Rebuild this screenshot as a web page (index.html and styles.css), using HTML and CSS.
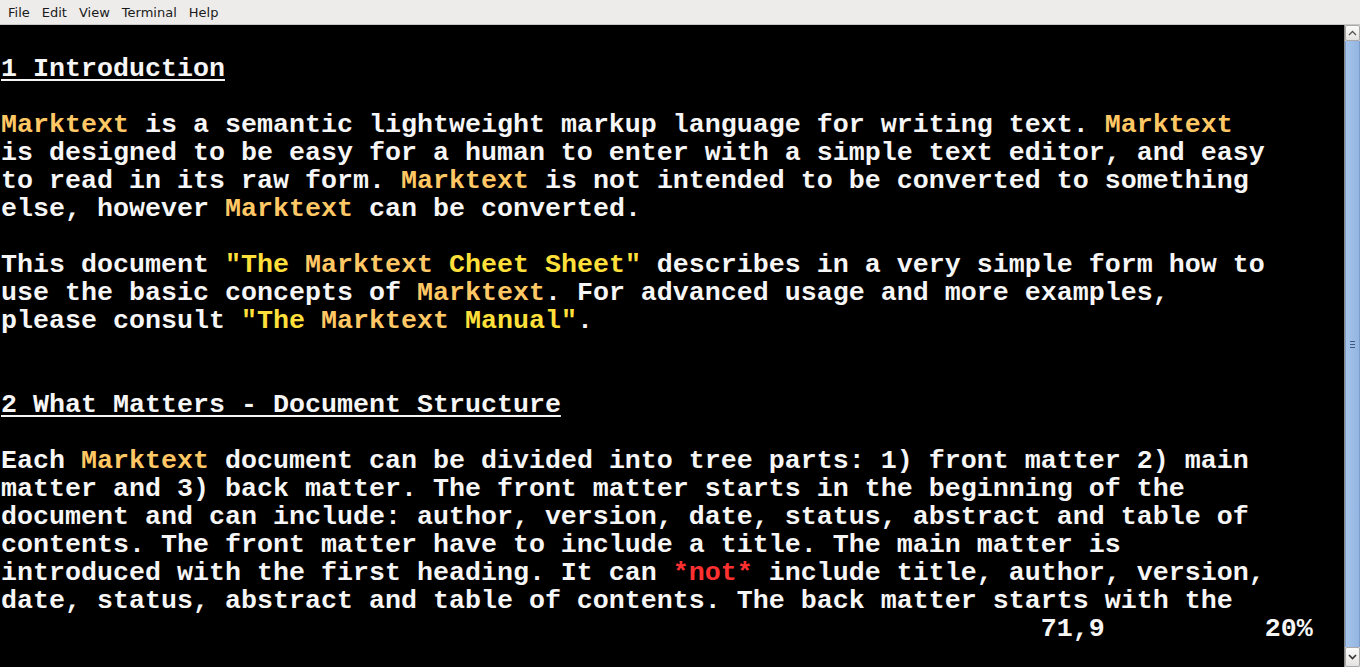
FILE: index.html
```html
<!DOCTYPE html>
<html>
<head>
<meta charset="utf-8">
<link rel="stylesheet" href="styles.css">
</head>
<body>
<div class="window">
  <div class="menubar">
    <span class="menu">File</span>
    <span class="menu">Edit</span>
    <span class="menu">View</span>
    <span class="menu">Terminal</span>
    <span class="menu">Help</span>
  </div>
  <div class="main">
    <div class="term"><pre class="screen">

<span class="h">1 Introduction</span>

<span class="o">Marktext</span> is a semantic lightweight markup language for writing text. <span class="o">Marktext</span>
is designed to be easy for a human to enter with a simple text editor, and easy
to read in its raw form. <span class="o">Marktext</span> is not intended to be converted to something
else, however <span class="o">Marktext</span> can be converted.

This document <span class="y">"The </span><span class="o">Marktext</span><span class="y"> Cheet Sheet"</span> describes in a very simple form how to
use the basic concepts of <span class="o">Marktext</span>. For advanced usage and more examples,
please consult <span class="y">"The </span><span class="o">Marktext</span><span class="y"> Manual"</span>.


<span class="h">2 What Matters - Document Structure</span>

Each <span class="o">Marktext</span> document can be divided into tree parts: 1) front matter 2) main
matter and 3) back matter. The front matter starts in the beginning of the
document and can include: author, version, date, status, abstract and table of
contents. The front matter have to include a title. The main matter is
introduced with the first heading. It can <span class="r">*not*</span> include title, author, version,
date, status, abstract and table of contents. The back matter starts with the
                                                                 71,9          20%</pre></div>
    <div class="scrollbar">
      <div class="sbtn">
        <svg width="9" height="6" viewBox="0 0 9 6"><path d="M1 5 L4.5 1.5 L8 5" fill="none" stroke="#555" stroke-width="1.3"/></svg>
      </div>
      <div class="thumb">
        <div class="grip"></div>
        <div class="grip"></div>
        <div class="grip"></div>
      </div>
      <div class="sbtn">
        <svg width="9" height="6" viewBox="0 0 9 6"><path d="M1 1 L4.5 4.5 L8 1" fill="none" stroke="#333" stroke-width="1.6"/></svg>
      </div>
    </div>
  </div>
</div>
</body>
</html>
```

FILE: styles.css
```css
html, body {
  margin: 0;
  padding: 0;
  height: 100%;
  background: #000;
}
.window {
  display: flex;
  flex-direction: column;
  height: 667px;
  width: 1360px;
  overflow: hidden;
}
.menubar {
  height: 24px;
  flex: none;
  display: flex;
  align-items: center;
  padding-left: 2px;
  background: #edeceb;
  border-bottom: 1px solid #c9c7c4;
  font-family: "DejaVu Sans", sans-serif;
  font-size: 13px;
  color: #1a1a1a;
}
.menu {
  padding: 0 6px;
}
.main {
  flex: 1;
  display: flex;
  min-height: 0;
}
.term {
  flex: 1;
  background: #000;
  padding-left: 1px;
  padding-top: 2px;
  overflow: hidden;
}
.screen {
  margin: 0;
  font-family: "Courier New", "Nimbus Mono PS", "Nimbus Mono L", "FreeMono", "Liberation Mono", monospace;
  font-weight: bold;
  font-size: 26.67px;
  line-height: 28px;
  color: #f6f6f6;
  white-space: pre;
}
.h {
  text-decoration: underline;
  text-decoration-thickness: 2px;
  text-underline-offset: 3px;
}
.o { color: #ffc865; }
.y { color: #ffe03a; }
.r { color: #ff3030; }
.scrollbar {
  width: 15px;
  flex: none;
  display: flex;
  flex-direction: column;
  background: #d9d8d6;
  border-left: 1px solid #8c8c8c;
}
.sbtn {
  height: 16px;
  flex: none;
  display: flex;
  align-items: center;
  justify-content: center;
  background: linear-gradient(#fbfbfb, #e4e3e1);
  border: 1px solid #a9a9a9;
  border-radius: 2px;
  box-sizing: border-box;
}
.scrollbar .sbtn:last-child {
  height: 20px;
}
.thumb {
  flex: 1;
  background: linear-gradient(90deg, #a7c4ea, #92b5e2);
  border-left: 1px solid #7d9cc8;
  border-right: 1px solid #7d9cc8;
  display: flex;
  flex-direction: column;
  align-items: center;
  justify-content: center;
  gap: 2px;
}
.grip {
  width: 5px;
  height: 1px;
  background: #3d5a85;
}
```
